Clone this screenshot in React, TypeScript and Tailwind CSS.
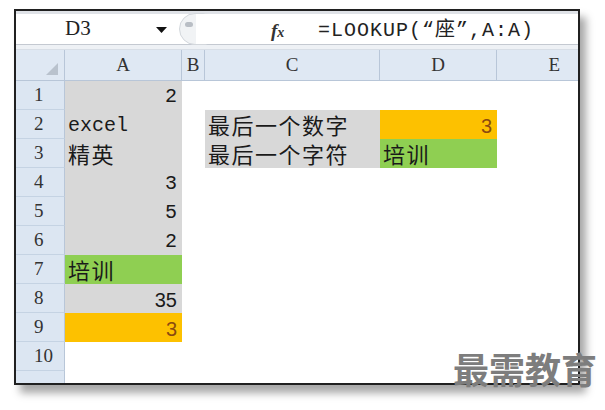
import React from "react";

const mono = { fontFamily: '"Liberation Mono", "Noto Sans CJK SC", monospace' };
const sans = { fontFamily: '"Liberation Sans", "Noto Sans CJK SC", sans-serif' };
const cjk = { fontFamily: '"Noto Sans CJK SC", sans-serif' };
const serif = { fontFamily: '"Liberation Serif", "DejaVu Serif", serif' };

type Cell = { text?: string; bg?: string; align?: "l" | "r"; font?: "mono" | "sans" | "cjk"; color?: string };

const colA: Cell[] = [
  { text: "2", bg: "bg-[#d8d8d8]", align: "r", font: "mono" },
  { text: "excel", bg: "bg-[#d8d8d8]", align: "l", font: "mono" },
  { text: "精英", bg: "bg-[#d8d8d8]", align: "l", font: "cjk" },
  { text: "3", bg: "bg-[#d8d8d8]", align: "r", font: "mono" },
  { text: "5", bg: "bg-[#d8d8d8]", align: "r", font: "mono" },
  { text: "2", bg: "bg-[#d8d8d8]", align: "r", font: "mono" },
  { text: "培训", bg: "bg-[#8fcf52]", align: "l", font: "cjk" },
  { text: "35", bg: "bg-[#d8d8d8]", align: "r", font: "sans" },
  { text: "3", bg: "bg-[#fdc100]", align: "r", font: "sans", color: "text-[#8a4a10]" },
  {},
];

function CellView({ c, w }: { c: Cell; w: string }) {
  const style = c.font === "sans" ? sans : c.font === "cjk" ? cjk : mono;
  return (
    <div
      className={`${w} h-[29px] shrink-0 flex items-end pb-[1px] ${c.bg ?? "bg-white"} ${
        c.align === "r" ? "justify-end pr-[5px]" : "justify-start pl-[3px]"
      }`}
    >
      {c.text && (
        <span
          style={style}
          className={`${c.font === "cjk" ? "text-[22px] tracking-[1.5px] leading-[27px]" : "text-[20px] leading-[24px]"} ${
            c.color ?? "text-[#1a1a1a]"
          }`}
        >
          {c.text}
        </span>
      )}
    </div>
  );
}

export default function App() {
  const rowsC: (Cell | null)[] = [
    null,
    { text: "最后一个数字", bg: "bg-[#d8d8d8]", align: "l", font: "cjk" },
    { text: "最后一个字符", bg: "bg-[#d8d8d8]", align: "l", font: "cjk" },
  ];
  const rowsD: (Cell | null)[] = [
    null,
    { text: "3", bg: "bg-[#fdc100]", align: "r", font: "sans", color: "text-[#8a4a10]" },
    { text: "培训", bg: "bg-[#8fcf52]", align: "l", font: "cjk" },
  ];

  return (
    <div className="w-[605px] h-[410px] bg-white relative overflow-hidden">
      <div className="absolute left-[14px] top-[9px] w-[566px] h-[376px] border-2 border-[#202020] bg-white shadow-[6px_8px_8px_rgba(0,0,0,0.35)] flex flex-col overflow-hidden">
        {/* formula bar */}
        <div className="h-[3px] shrink-0 bg-[#dfe2e7]" />
        <div className="h-[31px] shrink-0 flex bg-white border-b border-[#c4c9d1]">
          <div className="w-[160px] flex items-center relative">
            <span style={serif} className="ml-[49px] text-[21px] text-[#222]">D3</span>
            <svg className="absolute left-[140px] top-[13px]" width="11" height="7" viewBox="0 0 11 7">
              <path d="M0 0 H11 L5.5 6 Z" fill="#111" />
            </svg>
          </div>
          <div className="w-[100px] relative">
            <div className="absolute left-[3px] top-[-1px] w-[40px] h-[32px] rounded-full border border-[#d3d7dc] bg-[#f1f3f5]" />
            <div className="absolute left-[9px] top-[8px] w-[8px] h-[5px] rounded-full bg-[#b9bec5]" />
            <div className="absolute left-[20px] top-0 w-[80px] h-[30px] bg-white" />
            <span style={serif} className="absolute left-[95px] top-[3px] italic font-bold text-[19px] text-[#333]">
              f<span className="text-[14px]">x</span>
            </span>
          </div>
          <div className="flex-1 flex items-center pl-[42px]">
            <span style={mono} className="text-[20px] text-[#222] tracking-[1px]">
              =LOOKUP(“<span style={{ fontFamily: '"Noto Sans CJK SC", sans-serif' }}>座</span>”,A:A)
            </span>
          </div>
        </div>
        <div className="h-[5px] shrink-0 bg-[#eef1f5] border-b border-[#d8dee6]" />
        {/* column headers */}
        <div className="h-[31px] shrink-0 flex bg-[#dfe8f3] border-b border-[#b8c6d8]" style={serif}>
          <div className="w-[49px] border-r border-[#b8c6d8] relative">
            <svg className="absolute right-[6px] bottom-[5px]" width="12" height="12" viewBox="0 0 12 12">
              <path d="M12 0 V12 H0 Z" fill="#b9c2cd" />
            </svg>
          </div>
          <div className="w-[117px] border-r border-[#b8c6d8] flex items-center justify-center text-[19px] text-[#333]">A</div>
          <div className="w-[23px] border-r border-[#b8c6d8] flex items-center justify-center text-[19px] text-[#333]">B</div>
          <div className="w-[175px] border-r border-[#b8c6d8] flex items-center justify-center text-[19px] text-[#333]">C</div>
          <div className="w-[117px] border-r border-[#b8c6d8] flex items-center justify-center text-[19px] text-[#333]">D</div>
          <div className="flex-1 flex items-center justify-end pr-[18px] text-[19px] text-[#333]">E</div>
        </div>
        {/* rows */}
        <div className="flex flex-col shrink-0">
          {colA.map((a, i) => (
            <div key={i} className="flex h-[29px] shrink-0">
              <div
                style={serif}
                className="w-[49px] shrink-0 border-r border-[#b8c6d8] border-b border-b-[#c5d3e3] bg-[#dce6f2] flex items-center pl-[18px] text-[19px] text-[#333]"
              >
                {i + 1}
              </div>
              <CellView c={a} w="w-[117px]" />
              <div className="w-[23px] shrink-0 bg-white" />
              {rowsC[i] ? <CellView c={rowsC[i]!} w="w-[175px]" /> : <div className="w-[175px] shrink-0" />}
              {rowsD[i] ? <CellView c={rowsD[i]!} w="w-[117px]" /> : <div className="w-[117px] shrink-0" />}
              <div className="flex-1" />
            </div>
          ))}
          <div className="flex h-[29px] shrink-0">
            <div className="w-[49px] border-r border-[#b8c6d8] bg-[#dce6f2]" />
          </div>
        </div>
      </div>
      <div
        style={cjk}
        className="absolute left-[453px] top-[346px] text-[36px] font-bold text-[#7d7d7d] leading-[44px] tracking-[0px]"
      >
        最需教育
      </div>
    </div>
  );
}
